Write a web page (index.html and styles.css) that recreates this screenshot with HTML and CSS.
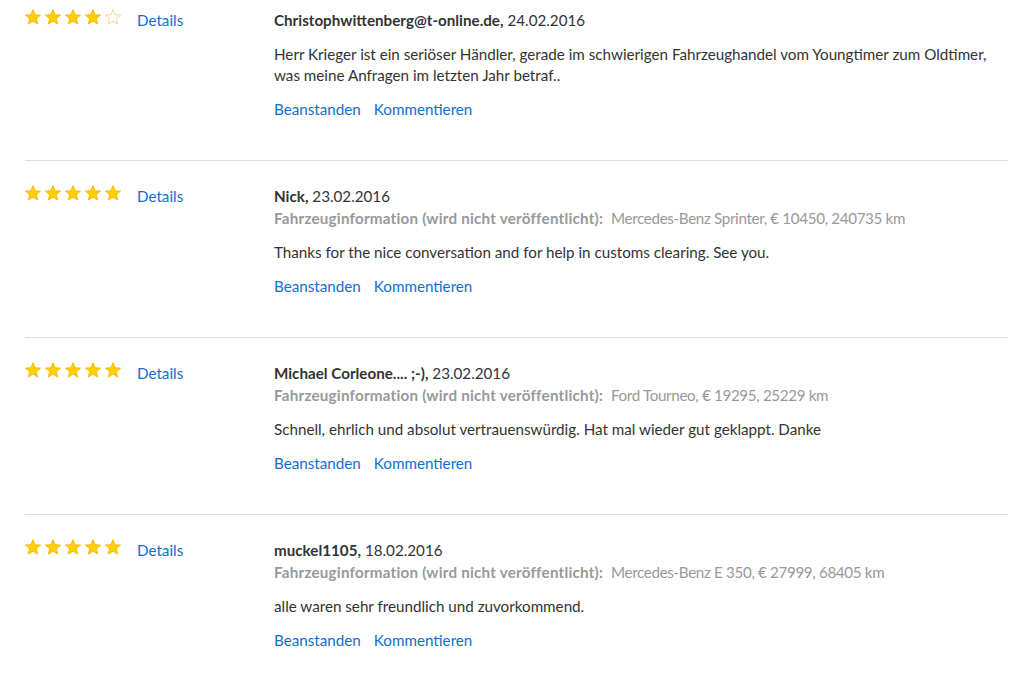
FILE: index.html
```html
<!DOCTYPE html>
<html lang="de">

<head>
    <meta charset="UTF-8">
    <meta name="viewport" content="width=device-width, initial-scale=1.0">
    <title>Bewertungen</title>
    <link rel="stylesheet" href="styles.css">
</head>

<body>
    <svg class="defs" width="0" height="0">
        <symbol id="star" viewBox="0 0 16 16">
            <polygon points="8,0.6 10.1,5.7 15.6,6.1 11.4,9.7 12.7,15.1 8,12.2 3.3,15.1 4.6,9.7 0.4,6.1 5.9,5.7" />
        </symbol>
    </svg>

    <div class="reviews">
        <div class="review">
            <div class="stars">
                <svg class="star"><use href="#star" /></svg>
                <svg class="star"><use href="#star" /></svg>
                <svg class="star"><use href="#star" /></svg>
                <svg class="star"><use href="#star" /></svg>
                <svg class="star empty"><use href="#star" /></svg>
            </div>
            <a href="#" class="details">Details</a>
            <div class="content">
                <p class="author"><b>Christophwittenberg@t-online.de,</b> 24.02.2016</p>
                <p class="text">Herr Krieger ist ein seriöser Händler, gerade im schwierigen Fahrzeughandel vom Youngtimer zum Oldtimer, was meine Anfragen im letzten Jahr betraf..</p>
                <div class="actions">
                    <a href="#">Beanstanden</a>
                    <a href="#">Kommentieren</a>
                </div>
            </div>
        </div>

        <div class="review">
            <div class="stars">
                <svg class="star"><use href="#star" /></svg>
                <svg class="star"><use href="#star" /></svg>
                <svg class="star"><use href="#star" /></svg>
                <svg class="star"><use href="#star" /></svg>
                <svg class="star"><use href="#star" /></svg>
            </div>
            <a href="#" class="details">Details</a>
            <div class="content">
                <p class="author"><b>Nick,</b> 23.02.2016</p>
                <p class="vehicle"><b>Fahrzeuginformation (wird nicht veröffentlicht):</b> <span>Mercedes-Benz Sprinter, € 10450, 240735 km</span></p>
                <p class="text">Thanks for the nice conversation and for help in customs clearing. See you.</p>
                <div class="actions">
                    <a href="#">Beanstanden</a>
                    <a href="#">Kommentieren</a>
                </div>
            </div>
        </div>

        <div class="review">
            <div class="stars">
                <svg class="star"><use href="#star" /></svg>
                <svg class="star"><use href="#star" /></svg>
                <svg class="star"><use href="#star" /></svg>
                <svg class="star"><use href="#star" /></svg>
                <svg class="star"><use href="#star" /></svg>
            </div>
            <a href="#" class="details">Details</a>
            <div class="content">
                <p class="author"><b>Michael Corleone.... ;-),</b> 23.02.2016</p>
                <p class="vehicle"><b>Fahrzeuginformation (wird nicht veröffentlicht):</b> <span>Ford Tourneo, € 19295, 25229 km</span></p>
                <p class="text">Schnell, ehrlich und absolut vertrauenswürdig. Hat mal wieder gut geklappt. Danke</p>
                <div class="actions">
                    <a href="#">Beanstanden</a>
                    <a href="#">Kommentieren</a>
                </div>
            </div>
        </div>

        <div class="review">
            <div class="stars">
                <svg class="star"><use href="#star" /></svg>
                <svg class="star"><use href="#star" /></svg>
                <svg class="star"><use href="#star" /></svg>
                <svg class="star"><use href="#star" /></svg>
                <svg class="star"><use href="#star" /></svg>
            </div>
            <a href="#" class="details">Details</a>
            <div class="content">
                <p class="author"><b>muckel1105,</b> 18.02.2016</p>
                <p class="vehicle"><b>Fahrzeuginformation (wird nicht veröffentlicht):</b> <span>Mercedes-Benz E 350, € 27999, 68405 km</span></p>
                <p class="text">alle waren sehr freundlich und zuvorkommend.</p>
                <div class="actions">
                    <a href="#">Beanstanden</a>
                    <a href="#">Kommentieren</a>
                </div>
            </div>
        </div>
    </div>
</body>

</html>
```

FILE: styles.css
```css
* {
    margin: 0;
    padding: 0;
    box-sizing: border-box;
}

body {
    font-family: 'Lato', sans-serif;
    font-size: 15.2px;
    color: #333;
    background-color: #fff;
}

a {
    color: #0f6fd0;
    text-decoration: none;
}

.defs {
    position: absolute;
}

.reviews {
    margin: 0 4px 0 25px;
}

.review {
    display: grid;
    grid-template-columns: 112px 137px 1fr;
    align-items: start;
    padding: 24px 0 40px;
    border-bottom: 1px solid #ddd;
}

.review:first-child {
    padding-top: 9px;
}

.review:last-child {
    border-bottom: none;
}

.stars {
    display: flex;
    gap: 4px;
    height: 16px;
}

.star {
    width: 16px;
    height: 16px;
    fill: #ffd000;
    stroke: #f2b000;
    stroke-width: 0.8;
}

.star.empty {
    fill: #fff;
    stroke: #f6c77a;
}

.details {
    line-height: 22px;
}

.author,
.vehicle {
    line-height: 22px;
}

.vehicle {
    color: #999;
}

.vehicle b {
    letter-spacing: 0.22px;
    margin-right: 4px;
}

.vehicle span {
    letter-spacing: -0.35px;
}

.text {
    line-height: 21px;
    margin-top: 13px;
}

.actions {
    display: flex;
    gap: 13px;
    line-height: 22px;
    margin-top: 12px;
}
```
